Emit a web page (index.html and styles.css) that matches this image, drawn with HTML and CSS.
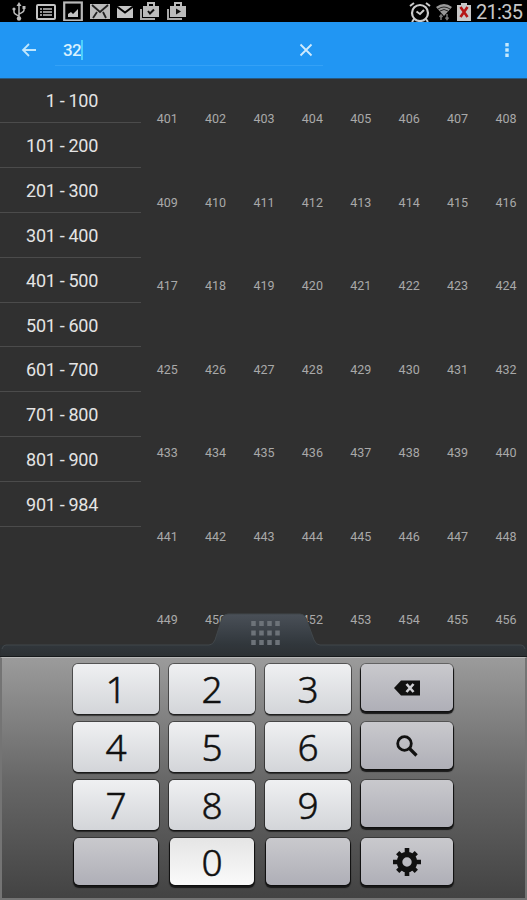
FILE: index.html
```html
<!DOCTYPE html>
<html lang="en">
<head>
  <meta charset="UTF-8">
  <title>Go to number</title>
  <link rel="stylesheet" href="styles.css">
</head>
<body>
  <div class="screen">
    <div class="status">
      <div class="status-icons">
        <svg width="14" height="20" viewBox="0 0 14 20"><path d="M7 3v14M2 8v3q0 2 5 4M12 7v2q0 2-5 4" fill="none" stroke="#bbb" stroke-width="1.5"/><path d="M4.500 5L7 1l2.500 4z" fill="#bbb"/><circle cx="2" cy="8" r="1.6" fill="#bbb"/><path d="M10.500 5h3v3h-3z" fill="#bbb"/><circle cx="7" cy="17.500" r="2.200" fill="#bbb"/></svg>
        <svg width="20" height="20" viewBox="0 0 20 20"><rect x="1" y="4" width="18" height="14" rx="1" fill="none" stroke="#c4c4c4" stroke-width="2"/><path d="M4 8h2M4 11h2M4 14h2M7 8h9M7 11h9M7 14h9" stroke="#c4c4c4" stroke-width="1.6"/></svg>
        <svg width="20" height="20" viewBox="0 0 20 20"><rect x="1.200" y="1.500" width="17.600" height="18" fill="none" stroke="#b8b8b8" stroke-width="2.200"/><path d="M5 16v-3l3-2 2 2 5-5v8z" fill="#c4c4c4"/></svg>
        <svg width="20" height="20" viewBox="0 0 20 20"><path d="M0 3h20v15H0z" fill="#bbb"/><path d="M2 4l8 7 8-7M3 17l4-6M16 17l-3-6" fill="none" stroke="#222" stroke-width="1.800"/></svg>
        <svg width="16" height="20" viewBox="0 0 16 20"><path d="M0 5h16v12H0z" fill="#c4c4c4"/><path d="M0 5.500l8 6 8-6" fill="none" stroke="#000" stroke-width="1.800"/></svg>
        <svg width="20" height="20" viewBox="0 0 20 20"><path d="M1 8v10h14" fill="none" stroke="#aaa" stroke-width="2"/><path d="M3 5h16v11H3z" fill="#bbb"/><path d="M8 5V2h6v3" fill="none" stroke="#bbb" stroke-width="2"/><path d="M8 10l2 2.500 4-4" fill="none" stroke="#111" stroke-width="2"/></svg>
        <svg width="20" height="20" viewBox="0 0 20 20"><path d="M1 8v10h14" fill="none" stroke="#aaa" stroke-width="2"/><path d="M3 5h16v11H3z" fill="#bbb"/><path d="M8 5V2h6v3" fill="none" stroke="#bbb" stroke-width="2"/><path d="M9 7.500l5 3-5 3z" fill="#111"/></svg>
      </div>
      <div class="status-right">
        <svg width="22" height="20" viewBox="0 0 22 20"><circle cx="11" cy="11" r="8" fill="none" stroke="#ccc" stroke-width="2.200"/><path d="M7.500 9.500L11 12l4-4M1 4l4-3M21 4l-4-3M5 17l-2 3M17 17l2 3" fill="none" stroke="#ccc" stroke-width="2"/></svg>
        <svg width="16" height="18" viewBox="0 0 16 18"><path d="M0 4q8-6 16 0L8 13z" fill="#999"/><path d="M2 6q6-4 12 0M4 8q4-3 8 0" fill="none" stroke="#222"/><path d="M5 12v5M3.500 14L5 12l1.500 2M11 11v5M9.500 14.500L11 16.500l1.500-2" fill="none" stroke="#777" stroke-width="1.500"/></svg>
        <svg width="14" height="18" viewBox="0 0 14 18"><path d="M0 2h4V0h6v2h4v16H0z" fill="#c8c8c8"/><path d="M3.500 4l7 10M10.500 4l-7 10" stroke="#b51515" stroke-width="2.600"/></svg>
        <span class="clock">21:35</span>
      </div>
    </div>

    <header class="toolbar">
      <svg class="back" width="16" height="16" viewBox="0 0 16 16"><path d="M15 8H2M8 2L2 8l6 6" fill="none" stroke="#bfe6fd" stroke-width="1.800"/></svg>
      <div class="search">
        <span class="query">32</span><span class="caret"></span>
        <svg class="clear" width="14" height="14" viewBox="0 0 14 14"><path d="M1.500 1.500l11 11M12.500 1.500l-11 11" stroke="#cfeafd" stroke-width="1.800"/></svg>
      </div>
      <svg class="more" width="4" height="16" viewBox="0 0 4 16"><path d="M.3 1h3.400v3.400H.3zM.3 6.300h3.400v3.400H.3zM.3 11.600h3.400V15H.3z" fill="#c5e8fc"/></svg>
    </header>

    <div class="content">
      <ul class="ranges">
        <li>1 - 100</li>
        <li>101 - 200</li>
        <li>201 - 300</li>
        <li>301 - 400</li>
        <li>401 - 500</li>
        <li>501 - 600</li>
        <li>601 - 700</li>
        <li>701 - 800</li>
        <li>801 - 900</li>
        <li>901 - 984</li>
      </ul>
      <div class="numbers" id="numbers"></div>
    </div>

    <div class="keyboard">
      <svg class="handle" width="527" height="45" viewBox="0 0 527 45">
        <defs>
          <linearGradient id="rim" x1="0" y1="0" x2="0" y2="1">
            <stop offset="0" stop-color="#4a5058"/>
            <stop offset=".7" stop-color="#31373c"/>
            <stop offset="1" stop-color="#2c3033"/>
          </linearGradient>
        </defs>
        <path d="M1 44V37q1-5 5-5H209q4 0 6-5L222 5q2-4 6-4H300q4 0 6 4L314 27q2 5 6 5H521q4 0 5 5v7z" fill="url(#rim)"/>
        <path d="M2 36q1-4 4-4H209q4 0 6-5L222 5q2-4 6-4H300q4 0 6 4L314 27q2 5 6 5H521q3 0 4 4" fill="none" stroke="#41474b"/>
        <path d="M253.500 8v24M261.500 8v24M269.500 8v24M277.500 8v24" stroke="#6d7379" stroke-width="4.500" stroke-dasharray="5 4.500"/>
        <path d="M0 43.500h527" stroke="#171a1c"/>
      </svg>
      <div class="keys">
        <div class="key">1</div>
        <div class="key">2</div>
        <div class="key">3</div>
        <div class="key fn">
          <svg width="28" height="16" viewBox="0 0 28 16"><path d="M1 8l7-7.500h19v15H8z" fill="#111"/><path d="M13.500 4l7 8M20.500 4l-7 8" stroke="#d0d0d4" stroke-width="2.600"/></svg>
        </div>
        <div class="key">4</div>
        <div class="key">5</div>
        <div class="key">6</div>
        <div class="key fn">
          <svg width="22" height="22" viewBox="0 0 22 22"><circle cx="8.500" cy="8.500" r="6.800" fill="none" stroke="#111" stroke-width="2.800"/><path d="M13.500 13.500l7 7" stroke="#111" stroke-width="3.200"/></svg>
        </div>
        <div class="key">7</div>
        <div class="key">8</div>
        <div class="key">9</div>
        <div class="key fn"></div>
        <div class="key fn small"></div>
        <div class="key zero small">0</div>
        <div class="key fn small"></div>
        <div class="key fn">
          <svg class="gear" width="28" height="28" viewBox="-14 -14 28 28"><circle r="7.500" fill="none" stroke="#111" stroke-width="5.600"/><path d="M0-14v5M0 14V9M-14 0h5M14 0H9M-9.300-9.300l3 3M9.300-9.300l-3 3M-9.300 9.300l3-3M9.300 9.300l-3-3" stroke="#111" stroke-width="4.600"/></svg>
        </div>
      </div>
    </div>
  </div>

  <script>
    const numbers = document.getElementById("numbers");

    for (let i = 401; i <= 456; i++) {
      const cell = document.createElement("div");
      cell.className = "number";
      // 451 sits behind the keyboard handle
      cell.textContent = i === 451 ? "" : i;
      numbers.appendChild(cell);
    }
  </script>
</body>
</html>
```
FILE: styles.css
```css
* {
  box-sizing: border-box;
}
body {
  margin: 0;
  font-family: Roboto, sans-serif;
  background: #303030;
}
svg {
  display: block;
  flex: none;
}
.screen {
  width: 527px;
  height: 900px;
  display: flex;
  flex-direction: column;
  overflow: hidden;
}
.status {
  height: 22px;
  background: #000;
  display: flex;
  justify-content: space-between;
  padding: 1px 4px 0 12px;
}
.status-icons {
  display: flex;
  gap: 7px;
}
.status-icons svg:nth-child(2) {
  margin-left: 3px;
}
.status-right {
  display: flex;
  align-items: center;
  gap: 5px;
}
.clock {
  color: #c8c8c8;
  font-size: 20px;
  line-height: 20px;
  width: 47px;
  letter-spacing: -0.7px;
  white-space: nowrap;
}
.toolbar {
  height: 57px;
  background: #2196f3;
  border-bottom: 1px solid #28597f;
  display: flex;
  align-items: center;
  padding: 0 18px 0 21px;
}
.search {
  width: 268px;
  height: 32px;
  margin: 0 auto 0 18px;
  border-bottom: 1px solid #34a1f6;
  display: flex;
  align-items: center;
  padding: 0 10px 0 8px;
}
.query {
  font-size: 17px;
  font-weight: 500;
  color: #d9f1fe;
  letter-spacing: -0.7px;
}
.caret {
  width: 2px;
  height: 20px;
  background: #4bd0fb;
}
.clear {
  margin-left: auto;
}
.content {
  height: 566px;
  display: flex;
  background: #303030;
}
.ranges {
  width: 141px;
  flex: none;
  margin: 0;
  padding: 0;
  list-style: none;
}
.ranges li {
  height: 44.9px;
  line-height: 46px;
  border-bottom: 1px solid #4b4b4b;
  padding-right: 43px;
  text-align: right;
  font-size: 18px;
  letter-spacing: -0.3px;
  color: #e4e4e4;
}
.ranges li:first-child {
  height: 44px;
  line-height: 44px;
}
.numbers {
  width: 388px;
  flex: none;
  margin-left: 2px;
  padding-top: 27px;
  display: grid;
  grid-template-columns: repeat(8, 48.4px);
  grid-auto-rows: 83.5px;
}
.number {
  text-align: center;
  font-size: 12.5px;
  line-height: 26px;
  color: #a9a9a9;
}
.keyboard {
  position: relative;
  height: 255px;
  padding-top: 12px;
  background: #2c3033;
}
/* the grip overlaps the last row of numbers */
.handle {
  position: absolute;
  left: 0;
  top: -32px;
}
.keys {
  height: 243px;
  border: 2px solid #747474;
  border-top: 1px solid #b8b8b8;
  background: linear-gradient(#9b9b9b, #686868 50%, #434343);
  padding: 6px 0 0 71px;
  display: grid;
  grid-template-columns: 86px 86px 86px 92px;
  grid-auto-rows: 50px;
  gap: 8px 10px;
}
.key {
  border-radius: 5px;
  background: linear-gradient(#eff0f2, #d3d5d9);
  box-shadow: 0 0 0 1px rgba(0, 0, 0, 0.45), 0 2px 1px rgba(0, 0, 0, 0.55);
  font-family: "Noto Sans", "Open Sans", sans-serif;
  font-weight: 300;
  font-size: 37px;
  -webkit-text-stroke: 0.5px #111;
  color: #111;
  display: flex;
  align-items: center;
  justify-content: center;
  line-height: 50px;
}
.fn {
  height: 47px;
  background: linear-gradient(#c9c9cd, #afafb7);
  box-shadow: 0 0 0 1px rgba(0, 0, 0, 0.35), 0 2px 1px 1px #181818;
}
.small {
  height: 47px;
  margin: 0 1px;
}
.zero {
  background: linear-gradient(#e5e5e5, #fafafa);
  box-shadow: 0 0 0 1px rgba(0, 0, 0, 0.35), 0 2px 1px 1px #181818;
}
```
